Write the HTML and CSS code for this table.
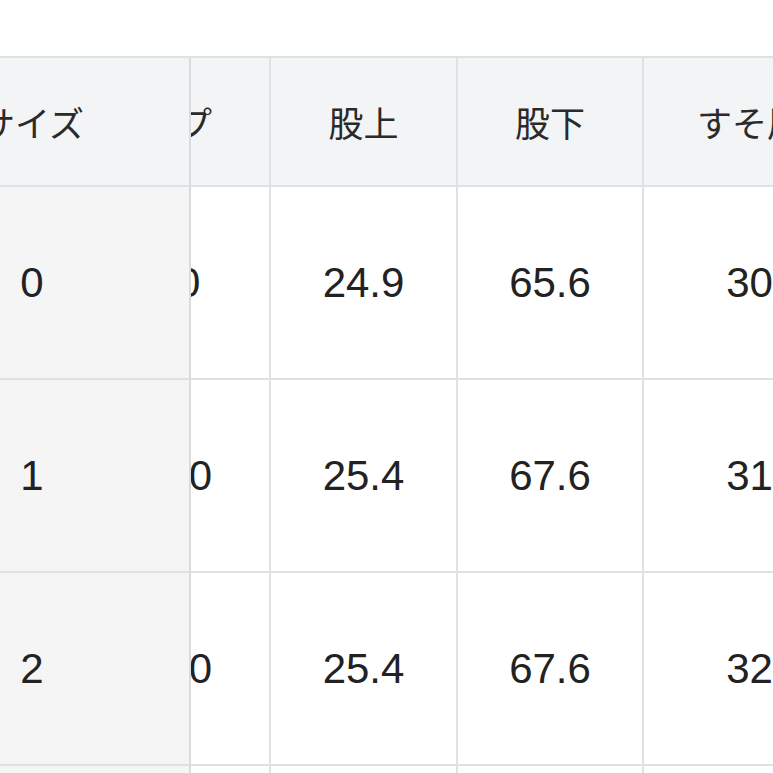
FILE: index.html
```html
<!DOCTYPE html>
<html lang="ja">
<head>
<meta charset="utf-8">
<title>サイズ表</title>
<link rel="stylesheet" href="styles.css">
</head>
<body>
<div class="size-table">
  <div class="frozen">
    <div class="cell head">サイズ</div>
    <div class="cell">0</div>
    <div class="cell">1</div>
    <div class="cell">2</div>
    <div class="cell">3</div>
  </div>
  <div class="scroller">
    <div class="grid">
      <div class="cell head">ヒップ</div>
      <div class="cell head">股上</div>
      <div class="cell head">股下</div>
      <div class="cell head">すそ周り</div>

      <div class="cell">98.0</div>
      <div class="cell">24.9</div>
      <div class="cell">65.6</div>
      <div class="cell">30.0</div>

      <div class="cell">100.0</div>
      <div class="cell">25.4</div>
      <div class="cell">67.6</div>
      <div class="cell">31.0</div>

      <div class="cell">100.0</div>
      <div class="cell">25.4</div>
      <div class="cell">67.6</div>
      <div class="cell">32.0</div>

      <div class="cell">104.0</div>
      <div class="cell">26.0</div>
      <div class="cell">68.6</div>
      <div class="cell">33.0</div>
    </div>
  </div>
</div>
</body>
</html>
```
FILE: styles.css
```css
html, body {
  margin: 0;
  padding: 0;
  background: #ffffff;
  overflow: hidden;
}

body {
  width: 773px;
  height: 773px;
  font-family: "Liberation Sans", "Noto Sans CJK JP", sans-serif;
  color: #222222;
}

.size-table {
  display: flex;
  margin: 56px 0 0 -125px;
  border-top: 2px solid #dde2e5;
  width: 898px;
}

.frozen {
  box-sizing: border-box;
  flex: 0 0 316px;
  display: flex;
  flex-direction: column;
  background: #f5f5f6;
  border-right: 2px solid #d8dcdf;
  position: relative;
  z-index: 2;
}

.scroller {
  flex: 1 1 auto;
  overflow: hidden;
}

.grid {
  display: grid;
  grid-template-columns: 221px 187px 186px 248px;
  margin-left: -141px;
}

.cell {
  box-sizing: border-box;
  height: 193px;
  display: flex;
  align-items: center;
  justify-content: center;
  border-bottom: 2px solid #dde2e5;
  font-size: 42px;
  white-space: nowrap;
  background: #ffffff;
}

.grid .cell {
  border-right: 2px solid #dde2e5;
}

.frozen .cell {
  background: #f5f5f6;
}

.cell.head {
  height: 129px;
  font-family: "Noto Sans CJK JP", sans-serif;
  font-size: 35px;
  color: #2a2a2a;
  background: #f3f4f6;
}

.frozen .cell.head {
  background: #f3f4f6;
}
```
